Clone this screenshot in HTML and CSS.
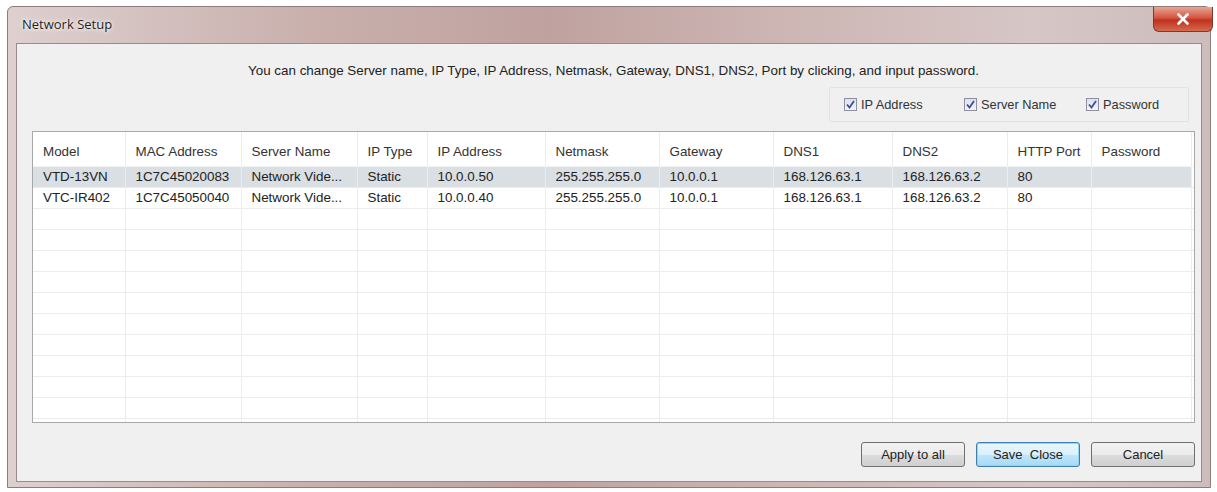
FILE: index.html
```html
<!DOCTYPE html>
<html lang="en">
<head>
    <meta charset="UTF-8">
    <title>Network Setup</title>
    <link rel="stylesheet" href="styles.css">
</head>
<body>
    <div class="window">
        <div class="titlebar">
            <span class="title">Network Setup</span>
            <button class="close-btn"><svg width="14" height="12" viewBox="0 0 14 12"><path d="M2.5 1.5 L11.5 10.5 M11.5 1.5 L2.5 10.5" stroke="#fff" stroke-width="2.6" stroke-linecap="round"/></svg></button>
        </div>

        <div class="client">
            <p class="hint">You can change Server name, IP Type, IP Address, Netmask, Gateway, DNS1, DNS2, Port by clicking, and input password.</p>

            <div class="options-row">
                <div class="options">
                    <label class="check"><span class="box"><svg width="9" height="9" viewBox="0 0 9 9"><path d="M1 4.5 L3.5 7.5 L8 1" fill="none" stroke="#3a4fa0" stroke-width="1.8"/></svg></span>IP Address</label>
                    <label class="check wide"><span class="box"><svg width="9" height="9" viewBox="0 0 9 9"><path d="M1 4.5 L3.5 7.5 L8 1" fill="none" stroke="#3a4fa0" stroke-width="1.8"/></svg></span>Server Name</label>
                    <label class="check last"><span class="box"><svg width="9" height="9" viewBox="0 0 9 9"><path d="M1 4.5 L3.5 7.5 L8 1" fill="none" stroke="#3a4fa0" stroke-width="1.8"/></svg></span>Password</label>
                </div>
            </div>

            <div class="grid-wrap">
                <table class="grid">
                    <colgroup>
                        <col style="width:92px"><col style="width:116px"><col style="width:116px"><col style="width:70px">
                        <col style="width:118px"><col style="width:114px"><col style="width:114px"><col style="width:119px">
                        <col style="width:115px"><col style="width:84px"><col style="width:100px"><col>
                    </colgroup>
                    <thead>
                        <tr>
                            <th>Model</th><th>MAC Address</th><th>Server Name</th><th>IP Type</th><th>IP Address</th><th>Netmask</th>
                            <th>Gateway</th><th>DNS1</th><th>DNS2</th><th>HTTP Port</th><th>Password</th><th></th>
                        </tr>
                    </thead>
                    <tbody>
                        <tr class="selected">
                            <td>VTD-13VN</td><td>1C7C45020083</td><td>Network Vide...</td><td>Static</td><td>10.0.0.50</td><td>255.255.255.0</td>
                            <td>10.0.0.1</td><td>168.126.63.1</td><td>168.126.63.2</td><td>80</td><td></td><td class="blank"></td>
                        </tr>
                        <tr>
                            <td>VTC-IR402</td><td>1C7C45050040</td><td>Network Vide...</td><td>Static</td><td>10.0.0.40</td><td>255.255.255.0</td>
                            <td>10.0.0.1</td><td>168.126.63.1</td><td>168.126.63.2</td><td>80</td><td></td><td class="blank"></td>
                        </tr>
                        <tr><td></td><td></td><td></td><td></td><td></td><td></td><td></td><td></td><td></td><td></td><td></td><td class="blank"></td></tr>
                        <tr><td></td><td></td><td></td><td></td><td></td><td></td><td></td><td></td><td></td><td></td><td></td><td class="blank"></td></tr>
                        <tr><td></td><td></td><td></td><td></td><td></td><td></td><td></td><td></td><td></td><td></td><td></td><td class="blank"></td></tr>
                        <tr><td></td><td></td><td></td><td></td><td></td><td></td><td></td><td></td><td></td><td></td><td></td><td class="blank"></td></tr>
                        <tr><td></td><td></td><td></td><td></td><td></td><td></td><td></td><td></td><td></td><td></td><td></td><td class="blank"></td></tr>
                        <tr><td></td><td></td><td></td><td></td><td></td><td></td><td></td><td></td><td></td><td></td><td></td><td class="blank"></td></tr>
                        <tr><td></td><td></td><td></td><td></td><td></td><td></td><td></td><td></td><td></td><td></td><td></td><td class="blank"></td></tr>
                        <tr><td></td><td></td><td></td><td></td><td></td><td></td><td></td><td></td><td></td><td></td><td></td><td class="blank"></td></tr>
                        <tr><td></td><td></td><td></td><td></td><td></td><td></td><td></td><td></td><td></td><td></td><td></td><td class="blank"></td></tr>
                        <tr><td></td><td></td><td></td><td></td><td></td><td></td><td></td><td></td><td></td><td></td><td></td><td class="blank"></td></tr>
                        <tr><td></td><td></td><td></td><td></td><td></td><td></td><td></td><td></td><td></td><td></td><td></td><td class="blank"></td></tr>
                    </tbody>
                </table>
            </div>

            <div class="actions">
                <button class="btn">Apply to all</button>
                <button class="btn default">Save&nbsp; Close</button>
                <button class="btn">Cancel</button>
            </div>
        </div>
    </div>
</body>
</html>
```

FILE: styles.css
```css
body {
    margin: 0;
    padding: 0;
    background-color: #fff;
    font-family: "Liberation Sans", Arial, sans-serif;
}

.window {
    margin: 6px 0 0 7px;
    width: 1204px;
    height: 482px;
    box-sizing: border-box;
    border: 1px solid #8c7c7c;
    border-radius: 6px 6px 0 0;
    background: linear-gradient(90deg, #ddd0cf 0%, #c9b0ad 25%, #bfa29f 45%, #cdb6b4 65%, #d6c6c6 85%, #cdbcbc 100%);
    padding: 0 8px 5px 8px;
    display: flex;
    flex-direction: column;
}

.titlebar {
    height: 36px;
    display: flex;
    justify-content: space-between;
    align-items: flex-start;
}

.title {
    margin: 8px 0 0 6px;
    font-family: "Open Sans", "DejaVu Sans", sans-serif;
    font-size: 13px;
    color: #1e1e1e;
    text-shadow: 0 0 6px #fff, 0 0 3px #fff;
}

.close-btn {
    width: 60px;
    height: 25px;
    margin: 0 -11px 0 0;
    border: 1px solid #7a3a32;
    border-top: none;
    border-radius: 0 0 6px 6px;
    background: linear-gradient(#e8a594 0%, #d4553f 45%, #c0301e 55%, #d66a4e 100%);
    display: flex;
    align-items: center;
    justify-content: center;
    padding: 0;
}

.client {
    flex: 1;
    background-color: #f0f0f0;
    border: 1px solid #9a8a8a;
    display: flex;
    flex-direction: column;
    padding: 0 6px 0 15px;
    font-size: 13.4px;
    line-height: 15px;
    color: #222;
}

.hint {
    margin: 19px 0 0 0;
    text-align: center;
}

.options-row {
    display: flex;
    justify-content: flex-end;
    margin-top: 9px;
    padding-right: 6px;
}

.options {
    display: flex;
    border: 1px solid #e2e2e2;
    border-radius: 2px;
    padding: 9px 14px 9px 14px;
    width: 330px;
}

.check {
    flex: none;
    width: 120px;
    display: flex;
    align-items: center;
    gap: 4px;
    font-size: 12.8px;
    color: #333;
}

.check.wide {
    width: 122px;
}

.check.last {
    width: auto;
}

.box {
    width: 11px;
    height: 11px;
    border: 1px solid #8e8f9f;
    background: linear-gradient(#dde0ef, #f4f4fa);
    display: flex;
    align-items: center;
    justify-content: center;
}

.grid-wrap {
    margin-top: 9px;
    height: 290px;
    border: 1px solid #a8a8a8;
    background-color: #fff;
    overflow: hidden;
}

.grid {
    width: 100%;
    border-collapse: collapse;
    table-layout: fixed;
}

.grid th {
    height: 34px;
    padding: 5px 0 0 10px;
    box-sizing: border-box;
    text-align: left;
    font-weight: normal;
    color: #333;
    border-right: 1px solid #ececec;
    border-bottom: 1px solid #f2f2f2;
    white-space: nowrap;
}

.grid td {
    height: 20px;
    padding: 0 0 0 10px;
    border-right: 1px solid #ececec;
    border-bottom: 1px solid #ececec;
    white-space: nowrap;
    overflow: hidden;
    color: #222;
}

.grid th:last-child,
.grid td.blank {
    border-right: none;
    background-color: #fff;
}

.grid tr.selected td {
    background-color: #dadfe3;
}

.grid tr.selected td.blank {
    background-color: #fff;
}

.actions {
    display: flex;
    justify-content: flex-end;
    gap: 11px;
    margin-top: 19px;
}

.btn {
    width: 104px;
    height: 25px;
    border: 1px solid #707070;
    border-radius: 3px;
    background: linear-gradient(#f2f2f2 0%, #ebebeb 50%, #dddddd 51%, #cfcfcf 100%);
    font-family: "Liberation Sans", Arial, sans-serif;
    font-size: 13px;
    color: #222;
    padding: 0;
}

.btn.default {
    border-color: #3c7fb1;
    box-shadow: inset 0 0 0 1px #8fd6f5;
    background: linear-gradient(#eaf6fd 0%, #d9f0fc 50%, #bee6fd 51%, #a7d9f5 100%);
}
```
